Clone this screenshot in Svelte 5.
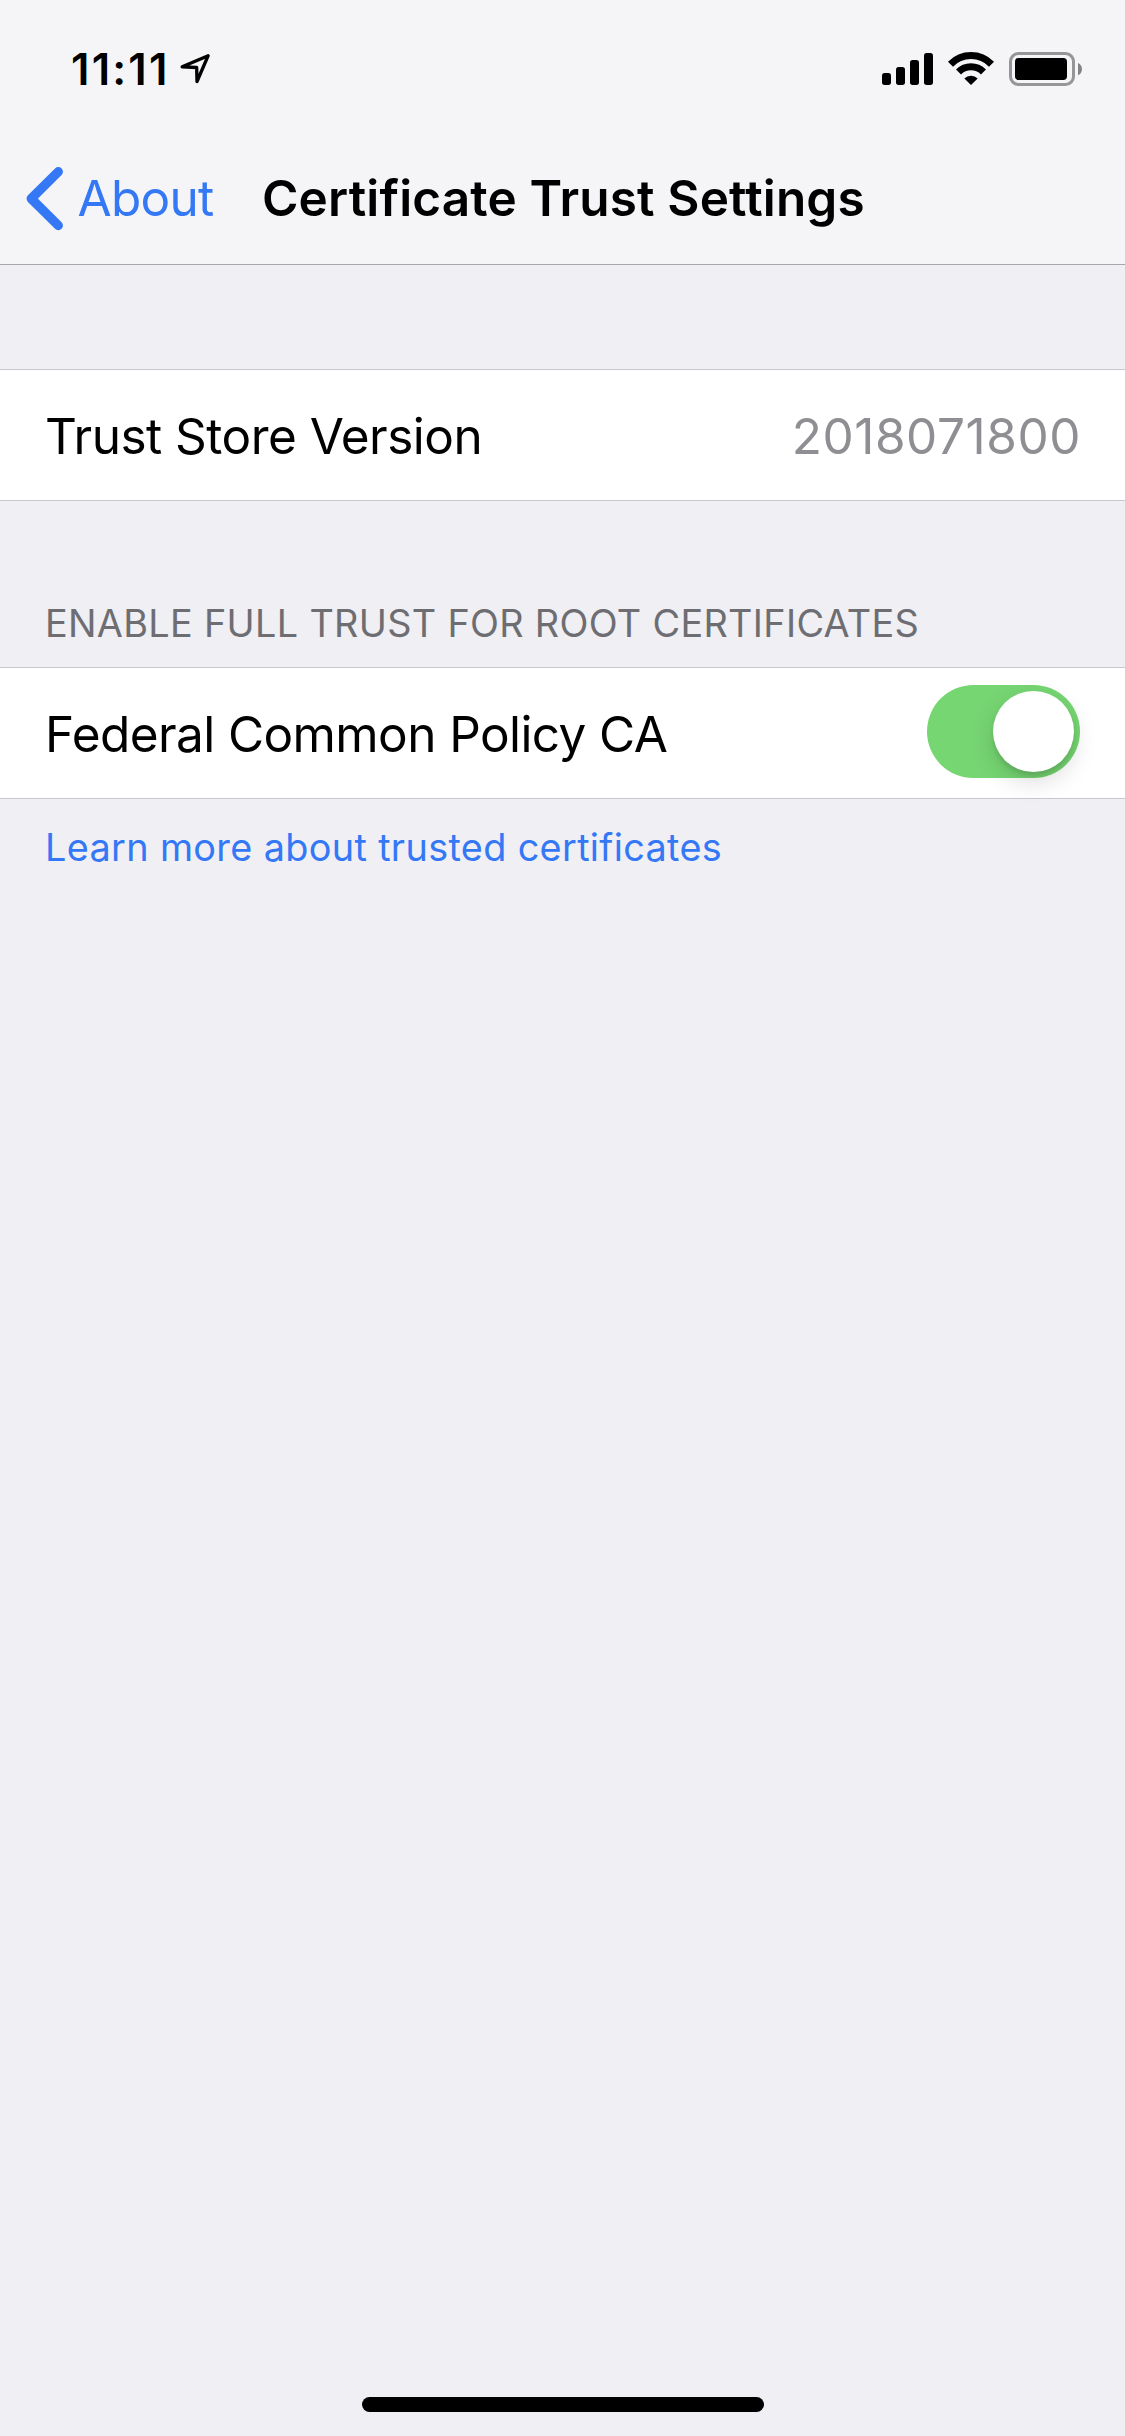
<script>
  let trusted = $state(true);
  const version = '2018071800';
  const bars = [
    { x: 66, y: 129 },
    { x: 108, y: 111 },
    { x: 150, y: 90 },
    { x: 192, y: 69 }
  ];
</script>

<div class="screen">
  <header>
    <div class="status">
      <span class="time">11:11</span>
      <svg class="location" viewBox="414 63 102 102" aria-hidden="true">
        <path d="M504.5 77 L426.5 110.5 L470 112.5 L471 154.5 Z" fill="none" stroke="#000" stroke-width="10" stroke-linejoin="round" />
      </svg>
      <svg class="indicators" viewBox="60 60 612 114" aria-hidden="true">
        {#each bars as bar}
          <rect x={bar.x} y={bar.y} width="27" height={165 - bar.y} rx="8" />
        {/each}
        <g fill="none" stroke="#000" stroke-width="21">
          <path d="M271.5 102.6 A85.5 85.5 0 0 1 394.5 102.6" />
          <path d="M295.6 125.9 A52 52 0 0 1 370.4 125.9" />
        </g>
        <path d="M313 145.5 A29 29 0 0 1 353 145.5 L333 165 Z" />
        <rect x="451.5" y="70.5" width="189" height="93" rx="24" fill="none" stroke="#969698" stroke-width="9" />
        <rect x="465" y="84" width="156" height="66" rx="11" />
        <path d="M654 99 C670 106 670 129 654 136 Z" fill="#838385" />
      </svg>
    </div>
    <nav>
      <a class="back" href="#about">
        <svg viewBox="24 165 42 67" aria-hidden="true">
          <path d="M58.3 171.7 L31.2 198.6 L58.3 225.5" fill="none" stroke="#3478f6" stroke-width="9.3" stroke-linecap="round" stroke-linejoin="round" />
        </svg>
        <span>About</span>
      </a>
      <h1>Certificate Trust Settings</h1>
    </nav>
  </header>

  <main>
    <section class="row first">
      <span class="label">Trust Store Version</span>
      <span class="value">{version}</span>
    </section>

    <h2>ENABLE FULL TRUST FOR ROOT CERTIFICATES</h2>
    <section class="row">
      <span class="label policy">Federal Common Policy CA</span>
      <button
        class="switch"
        class:on={trusted}
        role="switch"
        aria-checked={trusted}
        aria-label="Federal Common Policy CA"
        onclick={() => (trusted = !trusted)}
      ><i></i></button>
    </section>
    <a class="more" href="#learn">Learn more about trusted certificates</a>
  </main>

  <div class="home"></div>
</div>

<style>
  :global(body) {
    margin: 0;
    background: #efeff4;
  }
  .screen {
    box-sizing: border-box;
    width: 1125px;
    height: 2436px;
    display: flex;
    flex-direction: column;
    background: #efeff4;
    color: #000;
    font-family: Inter, 'Liberation Sans', sans-serif;
    font-size: 49.5px;
    line-height: 60px;
    white-space: nowrap;
    overflow: hidden;
  }
  a {
    color: #3478f6;
    text-decoration: none;
  }
  header {
    background: #f5f5f7;
    border-bottom: 1px solid #a7a7aa;
  }
  .status {
    box-sizing: border-box;
    height: 132px;
    padding: 50px 41px 0 71px;
    display: flex;
    align-items: flex-start;
  }
  .time {
    width: 107px;
    font-size: 43.6px;
    font-weight: 600;
    line-height: 39px;
    letter-spacing: 2.2px;
  }
  .location {
    width: 34px;
    height: 34px;
    margin-top: 1px;
  }
  .indicators {
    width: 204px;
    height: 38px;
    margin-left: auto;
  }
  nav {
    height: 132px;
    padding-left: 24px;
    display: flex;
    align-items: center;
  }
  .back {
    width: 238px;
    display: flex;
    align-items: center;
    gap: 11.5px;
    letter-spacing: -0.7px;
  }
  .back svg {
    width: 42px;
    height: 67px;
  }
  h1 {
    margin: 0;
    font-size: inherit;
    font-weight: 600;
    letter-spacing: 0.15px;
  }
  main {
    flex: 1;
  }
  .row {
    height: 130px;
    padding: 0 44px 0 45px;
    display: flex;
    align-items: center;
    justify-content: space-between;
    background: #fff;
    border-top: 1px solid #c8c7cc;
    border-bottom: 1px solid #c8c7cc;
  }
  .first {
    margin-top: 104px;
  }
  .label,
  .value {
    padding-top: 2px;
  }
  .label {
    letter-spacing: -0.53px;
  }
  .policy {
    letter-spacing: -0.59px;
  }
  .value {
    color: #8e8e93;
    letter-spacing: 0.57px;
  }
  h2 {
    margin: 99px 0 21px;
    padding-left: 45px;
    color: #6d6d72;
    font-size: 37.8px;
    font-weight: 400;
    line-height: 46px;
    letter-spacing: 0.32px;
  }
  .switch {
    box-sizing: border-box;
    width: 153px;
    height: 93px;
    margin-right: 1px;
    margin-bottom: 3px;
    padding: 6px;
    display: flex;
    border: 0;
    border-radius: 47px;
    background: #e5e5ea;
  }
  .switch i {
    width: 81px;
    height: 81px;
    border-radius: 50%;
    background: #fff;
    box-shadow: 0 9px 24px rgba(0, 0, 0, 0.15), 0 4px 4px rgba(0, 0, 0, 0.1);
  }
  .switch.on {
    justify-content: flex-end;
    background: #76d672;
  }
  .more {
    display: block;
    margin-top: 25px;
    padding-left: 45px;
    font-size: 37.8px;
    line-height: 46px;
    letter-spacing: 0.35px;
  }
  .home {
    width: 402px;
    height: 15px;
    margin: 0 auto 24px;
    border-radius: 8px;
    background: #000;
  }
</style>
